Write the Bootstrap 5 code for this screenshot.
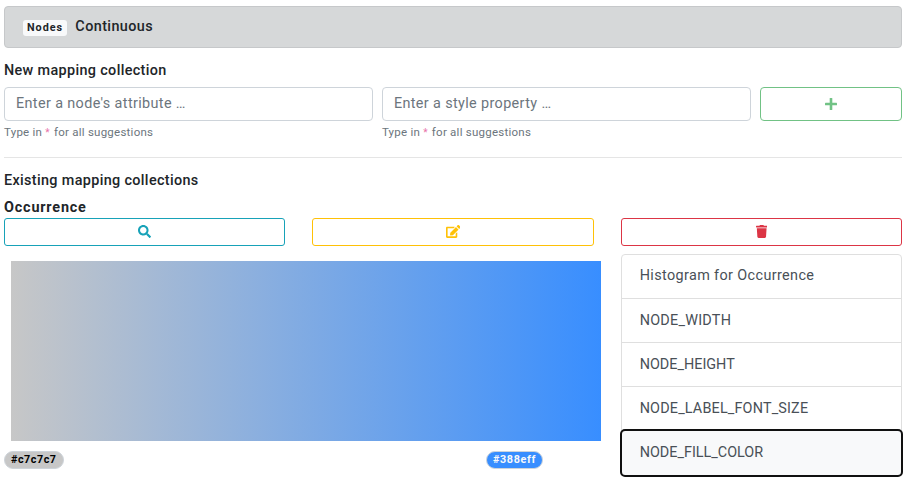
<!DOCTYPE html>
<html lang="en">
<head>
<meta charset="utf-8">
<title>Mapping collections</title>
<link href="https://cdn.jsdelivr.net/npm/bootstrap@5.3.0/dist/css/bootstrap.min.css" rel="stylesheet">
<style>
html { font-size: 14.4px; }
body { font-family: Roboto, sans-serif; color: #212529; line-height: 1.5; overflow: hidden; }
.page { padding: 6px 4px 0; min-height: 481px; }
.type-bar { height: 42px; background: #d6d8d9; border: 1px solid #c6c8ca; border-radius: 4px; padding: 0 18px; }
.type-bar .badge { font-size: 10.8px; line-height: 11px; padding: 2px 4px 3px; border-radius: 3px; margin-top: 2px; letter-spacing: 1px; color: #212529 !important; }
.type-bar .heading { letter-spacing: .4px; margin-left: 1px; }
.heading { font-size: 14.4px; line-height: 18px; font-weight: 500; margin: 0; letter-spacing: .35px; }
.new-title { margin-top: 14px; }
.entry-row { --bs-gutter-x: 9px; margin-top: 7px; }
.entry-row .form-control, .entry-row .btn { height: 34px; border-radius: 4px; font-size: 14.4px; }
.entry-row .form-control { padding: 4px 11px 6px; border-color: #ced4da; letter-spacing: .37px; }
.entry-row .form-control::placeholder { color: #6c757d; }
.hint { font-size: 11.52px; line-height: 17px; margin-top: 3px; color: #6c757d; letter-spacing: .24px; }
.hint .star { color: #e873a8; font-size: 10px; margin: 0 1px 0 0; }
.divider { margin: 16px 0 14px; border-top: 1px solid #e5e5e5; }
.collection-name { font-weight: 700; line-height: 18px; margin-top: 9px; letter-spacing: .82px; }
.action-row { --bs-gutter-x: 27px; margin-top: 1px; }
.action-row .btn { height: 28px; border-radius: 3px; }
.action-row svg { margin-top: -1px; }
.btn { background: #fff; }
.btn-add { color: #71c285; border-color: #71c285; }
.btn-find { color: #17a2b8; border-color: #17a2b8; }
.btn-edit { color: #ffc107; border-color: #ffc107; }
.btn-drop { color: #dc3545; border-color: #dc3545; }
.detail-row { --bs-gutter-x: 27px; margin-top: 8px; }
.ramp { height: 180px; width: 590px; margin: 7px 0 0 7px; background: linear-gradient(90deg, #c7c7c7, #388eff); }
.ramp-labels { margin-top: 10px; width: 539px; }
.ramp-labels .badge { font-size: 10.8px; line-height: 11px; padding: 2px 6px 3px; border: 1px solid #ced4da; height: 18px; letter-spacing: .52px; }
.ramp-labels .low { background: #c7c7c7; color: #000; }
.ramp-labels .high { background: #388eff; color: #f8f9fa; letter-spacing: .65px; }
.props { border-radius: 4px; }
.props .list-group-item { height: 45px; padding: 10px 18px; color: #495057; border-color: #dfdfdf; margin-bottom: -1px; }
.props .list-group-item + .list-group-item { border-top-width: 1px; padding-top: 11px; }
.props .first-item { letter-spacing: .38px; }
.props .width-item { letter-spacing: .25px; }
.props .label-item { letter-spacing: .17px; }
.props .chosen { height: 46px; background: #f8f9fa; outline: 2px solid #101010; outline-offset: -1px; border-radius: 4px; z-index: 2; }
</style>
<script src="https://cdn.jsdelivr.net/npm/bootstrap@5.3.0/dist/js/bootstrap.bundle.min.js"></script>
</head>
<body>
<main class="page">
  <div class="type-bar d-flex align-items-center gap-2">
    <span class="badge text-bg-light">Nodes</span><h1 class="heading">Continuous</h1>
  </div>
  <h2 class="heading new-title">New mapping collection</h2>
  <div class="row entry-row">
    <div class="col-5"><input class="form-control" placeholder="Enter a node's attribute …"><div class="hint">Type in <span class="star">*</span> for all suggestions</div></div>
    <div class="col-5"><input class="form-control" placeholder="Enter a style property …"><div class="hint">Type in <span class="star">*</span> for all suggestions</div></div>
    <div class="col-2"><button class="btn btn-add w-100 d-flex align-items-center justify-content-center p-0" aria-label="Add"><svg width="12" height="12" viewBox="0 0 12 12" fill="currentColor"><rect x="4.700" y="0" width="2.600" height="12" rx=".6"/><rect x="0" y="4.700" width="12" height="2.600" rx=".6"/></svg></button></div>
  </div>
  <div class="divider"></div>
  <h2 class="heading">Existing mapping collections</h2>
  <div class="collection-name">Occurrence</div>
  <div class="row action-row">
    <div class="col-4"><button class="btn btn-find w-100 d-flex align-items-center justify-content-center p-0" aria-label="Show"><svg width="13" height="13" viewBox="0 0 512 512" fill="currentColor"><path d="M505 442.700L405.300 343c-4.500-4.500-10.600-7-17-7H372c27.600-35.300 44-79.700 44-128C416 93.100 322.900 0 208 0S0 93.100 0 208s93.100 208 208 208c48.300 0 92.700-16.400 128-44v16.300c0 6.400 2.500 12.500 7 17l99.700 99.700c9.400 9.400 24.600 9.400 33.900 0l28.300-28.300c9.400-9.400 9.400-24.600.1-34zM208 336c-70.700 0-128-57.200-128-128 0-70.700 57.200-128 128-128 70.700 0 128 57.200 128 128 0 70.700-57.200 128-128 128z"/></svg></button></div>
    <div class="col-4"><button class="btn btn-edit w-100 d-flex align-items-center justify-content-center p-0" aria-label="Edit"><svg width="14.500" height="13" viewBox="0 0 576 512" fill="currentColor"><path d="M402.600 83.200l90.200 90.200c3.800 3.800 3.800 10 0 13.800L274.400 405.600l-92.800 10.300c-12.400 1.400-22.900-9.100-21.500-21.500l10.300-92.800L388.800 83.200c3.800-3.800 10-3.800 13.800 0zm162-22.900l-48.800-48.800c-15.200-15.200-39.900-15.200-55.200 0l-35.400 35.400c-3.800 3.800-3.800 10 0 13.800l90.200 90.200c3.800 3.800 10 3.800 13.800 0l35.400-35.400c15.200-15.300 15.200-40 0-55.200zM384 346.200V448H64V128h229.800c3.200 0 6.200-1.300 8.500-3.500l40-40c7.600-7.600 2.200-20.500-8.500-20.500H48C21.500 64 0 85.500 0 112v352c0 26.500 21.500 48 48 48h352c26.500 0 48-21.500 48-48V306.200c0-10.700-12.900-16-20.500-8.500l-40 40c-2.200 2.300-3.500 5.300-3.500 8.500z"/></svg></button></div>
    <div class="col-4"><button class="btn btn-drop w-100 d-flex align-items-center justify-content-center p-0" aria-label="Delete"><svg width="11.400" height="13" viewBox="0 0 448 512" fill="currentColor"><path d="M432 32H312l-9.400-18.700A24 24 0 0 0 281.100 0H166.800a23.700 23.700 0 0 0-21.400 13.300L136 32H16A16 16 0 0 0 0 48v32a16 16 0 0 0 16 16h416a16 16 0 0 0 16-16V48a16 16 0 0 0-16-16zM53.200 467a48 48 0 0 0 47.900 45h245.800a48 48 0 0 0 47.900-45L416 128H32z"/></svg></button></div>
  </div>
  <div class="row detail-row">
    <div class="col-8">
      <div class="ramp"></div>
      <div class="ramp-labels d-flex justify-content-between"><span class="badge rounded-pill low">#c7c7c7</span><span class="badge rounded-pill high">#388eff</span></div>
    </div>
    <div class="col-4">
      <div class="list-group props">
        <a class="list-group-item first-item">Histogram for Occurrence</a>
        <a class="list-group-item width-item">NODE_WIDTH</a>
        <a class="list-group-item">NODE_HEIGHT</a>
        <a class="list-group-item label-item">NODE_LABEL_FONT_SIZE</a>
        <a class="list-group-item chosen">NODE_FILL_COLOR</a>
      </div>
    </div>
  </div>
</main>
</body>
</html>
